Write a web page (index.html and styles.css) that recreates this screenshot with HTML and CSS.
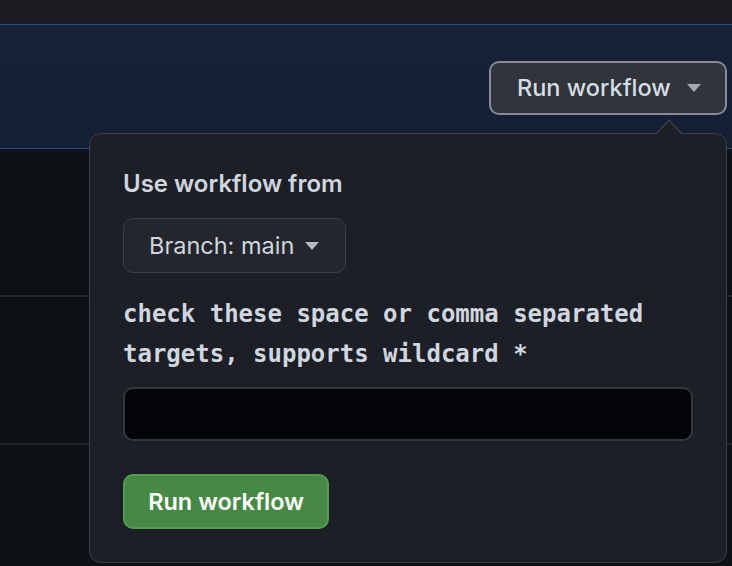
FILE: index.html
```html
<!DOCTYPE html>
<html lang="en">
<head>
<meta charset="utf-8">
<title>Run workflow</title>
<link rel="stylesheet" href="styles.css">
</head>
<body>
  <div class="topbar"></div>
  <div class="banner">
    <div class="menu">
      <button class="btn btn-header" type="button">
        <span>Run workflow</span>
        <span class="caret"></span>
      </button>
      <div class="popover">
        <form class="popover-body">
          <div class="title">Use workflow from</div>
          <button class="btn btn-branch" type="button">
            <span>Branch: main</span>
            <span class="caret"></span>
          </button>
          <label class="mono-label" for="targets">check these space or comma separated targets, supports wildcard *</label>
          <input id="targets" class="input" type="text">
          <button class="btn btn-primary" type="button">Run workflow</button>
        </form>
      </div>
    </div>
  </div>
  <div class="list">
    <div class="row"></div>
    <div class="row"></div>
    <div class="row"></div>
  </div>
</body>
</html>
```

FILE: styles.css
```css
* { box-sizing: border-box; }

html, body {
  margin: 0;
  padding: 0;
  height: 100%;
}

body {
  background: #0e1116;
  font-family: Inter, "Noto Sans", "Liberation Sans", sans-serif;
  color: #cdd3dc;
  overflow: hidden;
}

.topbar {
  height: 24px;
  background: #1a1c21;
}

.banner {
  height: 125px;
  border-top: 1px solid #2e4a7c;
  border-bottom: 1px solid #2e4a7c;
  background: linear-gradient(180deg, #172239 0%, #141e35 100%);
  display: flex;
  justify-content: flex-end;
  align-items: flex-start;
  padding: 36px 5px 0 0;
}

.menu {
  position: relative;
}

.btn {
  font-family: inherit;
  display: inline-flex;
  align-items: center;
  border-radius: 10px;
  cursor: pointer;
  font-size: 23.5px;
  line-height: 28px;
}

.caret {
  display: inline-block;
  flex: none;
  width: 0;
  height: 0;
  border-left: 7.5px solid transparent;
  border-right: 7.5px solid transparent;
  border-top: 8px solid currentColor;
}

.btn-header {
  height: 54px;
  width: 238px;
  padding: 0 25px 0 26px;
  background: #30343b;
  border: 2px solid #868b93;
  color: #d6dce5;
  gap: 16px;
  font-weight: 500;
  white-space: nowrap;
}
.btn-header .caret { color: #a4a9b1; }

.popover {
  position: absolute;
  top: 72px;
  right: 0;
  width: 638px;
  height: 430px;
  background: #1c1f25;
  border: 1px solid #3b4048;
  border-radius: 12px;
  z-index: 10;
}

.popover::before,
.popover::after {
  content: "";
  position: absolute;
  width: 0;
  height: 0;
  border-left: 13px solid transparent;
  border-right: 13px solid transparent;
}
.popover::before {
  right: 44px;
  top: -15px;
  border-bottom: 14px solid #3b4048;
}
.popover::after {
  right: 45px;
  top: -13px;
  border-left-width: 12px;
  border-right-width: 12px;
  border-bottom: 13px solid #1c1f25;
}

.popover-body {
  display: flex;
  flex-direction: column;
  align-items: flex-start;
  padding: 36px 33px 0 33px;
  margin: 0;
}

.title {
  font-size: 24px;
  line-height: 28px;
  font-weight: 600;
  color: #d0d6df;
  white-space: nowrap;
}

.btn-branch {
  margin-top: 20px;
  height: 55px;
  width: 223px;
  padding: 0 24px 0 25px;
  background: #23262d;
  border: 1px solid #3b4048;
  color: #d0d6df;
  gap: 11px;
  white-space: nowrap;
}
.btn-branch .caret { color: #b5bac2; }

.mono-label {
  margin-top: 21px;
  font-family: "DejaVu Sans Mono", "Liberation Mono", monospace;
  font-weight: bold;
  font-size: 24px;
  line-height: 40px;
  color: #d0d6df;
  width: 560px;
}

.input {
  margin-top: 13px;
  width: 570px;
  height: 54px;
  background: #02040a;
  border: 2px solid #33383f;
  border-radius: 10px;
  color: #d0d6df;
  font-size: 22px;
  padding: 0 14px;
}

.btn-primary {
  margin-top: 33px;
  height: 55px;
  width: 206px;
  justify-content: center;
  background: #458944;
  border: 2px solid #529b50;
  color: #ffffff;
  font-weight: 600;
  white-space: nowrap;
}

.list .row {
  height: 148px;
  border-bottom: 2px solid #23272d;
}
```
